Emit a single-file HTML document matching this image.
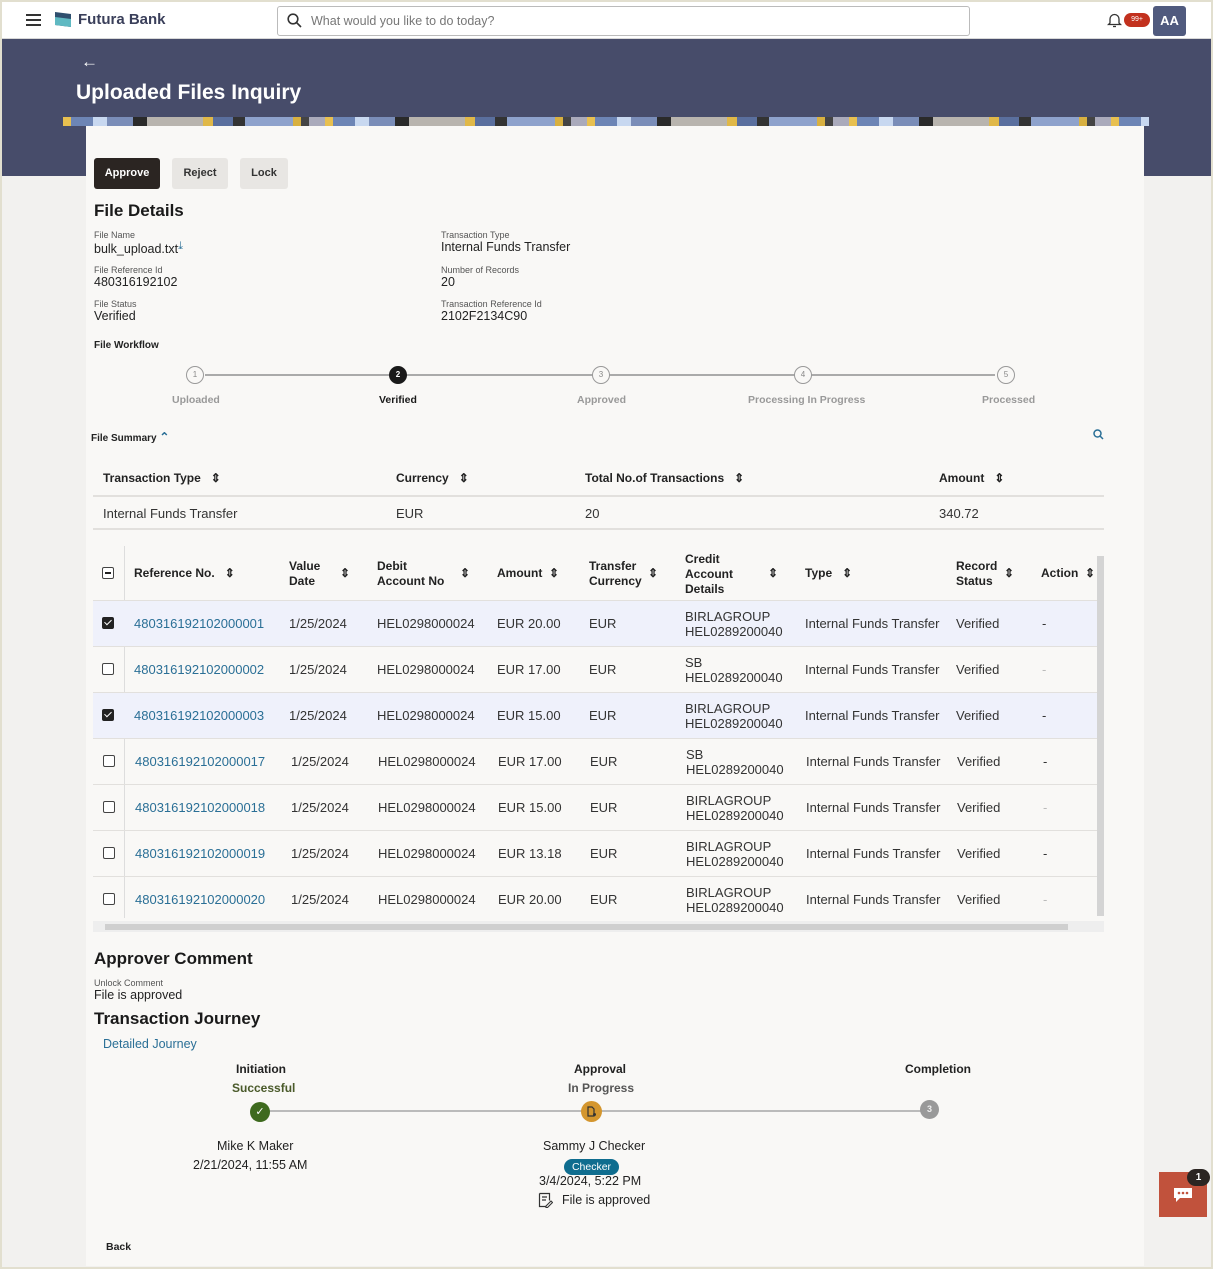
<!DOCTYPE html>
<html><head><meta charset="utf-8"><style>
*{margin:0;padding:0;box-sizing:border-box}
body{width:1213px;height:1269px;position:relative;overflow:hidden;background:#f2f1ef;font-family:"Liberation Sans",sans-serif;color:#222}
.a{position:absolute;white-space:nowrap}
.frame{position:absolute;left:0;top:0;width:1213px;height:1269px;border:2px solid #e2dfcf;pointer-events:none;z-index:50}
.lbl{font-size:9px;color:#555}
.val{font-size:12.5px;color:#222}
.th{font-size:12px;font-weight:bold;color:#222;line-height:15px}
.td{font-size:13px;color:#333}
.lnk{color:#2a6f96}
.cb{position:absolute;width:12px;height:12px;border:1.5px solid #444;border-radius:2px;background:#fff}
.cb.on{background:#222;border-color:#222}
.cb.on:after{content:"";position:absolute;left:3px;top:0px;width:3px;height:6px;border:solid #fff;border-width:0 1.5px 1.5px 0;transform:rotate(45deg)}
.step{position:absolute;width:18px;height:18px;border:1.5px solid #999;border-radius:50%;font-size:8px;color:#888;text-align:center;line-height:15px;background:#f9f8f6}
.stl{font-size:10.5px;font-weight:bold;color:#999}
</style></head><body>
<div class="frame"></div>
<div class="a" style="left:0;top:0;width:1213px;height:39px;background:#fff;border-bottom:1px solid #d8d8d8"></div>
<div class="a" style="left:26px;top:14px;width:15px;height:2px;background:#333;box-shadow:0 5px 0 #333,0 10px 0 #333"></div>
<svg class="a" style="left:54px;top:11px" width="19" height="17" viewBox="0 0 19 17"><path d="M1 1 L17 3 L17 16 L1 14Z" fill="#2f4f6e"/><path d="M1 6 L17 8 L17 16 L1 14Z" fill="#5fb9c2"/></svg>
<div class="a" style="left:78px;top:11px;font-size:15px;color:#3a3f5a;font-weight:bold">Futura Bank</div>
<div class="a" style="left:277px;top:6px;width:693px;height:30px;border:1px solid #bbb;border-radius:3px;background:#fff"></div>
<svg class="a" style="left:287px;top:13px" width="15" height="15" viewBox="0 0 15 15"><circle cx="6" cy="6" r="4.8" fill="none" stroke="#333" stroke-width="1.6"/><path d="M9.5 9.5L14 14" stroke="#333" stroke-width="1.6"/></svg>
<div class="a" style="left:311px;top:14px;font-size:12.5px;color:#777">What would you like to do today?</div>
<svg class="a" style="left:1107px;top:12px" width="15" height="16" viewBox="0 0 15 16"><path d="M3 11V7a4.5 4.5 0 0 1 9 0v4l1.5 1.5h-12Z" fill="none" stroke="#333" stroke-width="1.3"/><path d="M6 14.5h3" stroke="#333" stroke-width="1.3"/></svg>
<div class="a" style="left:1124px;top:13px;width:26px;height:14px;border-radius:7px;background:#c2311e;color:#fff;font-size:7px;text-align:center;line-height:14px">99+</div>
<div class="a" style="left:1153px;top:6px;width:33px;height:30px;border-radius:3px;background:#505a7e;color:#fff;font-size:13px;font-weight:bold;text-align:center;line-height:30px">AA</div>
<div class="a" style="left:2px;top:39px;width:1209px;height:137px;background:#474c6a"></div>
<div class="a" style="left:81px;top:52px;font-size:17px;color:#fff">&#8592;</div>
<div class="a" style="left:76px;top:81px;font-size:21px;font-weight:bold;color:#fff">Uploaded Files Inquiry</div>
<div class="a" style="left:63px;top:117px;width:1086px;height:9px;background:repeating-linear-gradient(90deg,#e8c050 0 8px,#6d85b5 8px 30px,#c8d8f0 30px 44px,#7a8db8 44px 70px,#2a2a2a 70px 84px,#b8b4ae 84px 140px,#e0b848 140px 150px,#5a6f9e 150px 170px,#333 170px 182px,#8ea2cc 182px 230px,#d8b040 230px 238px,#444 238px 246px,#aab 246px 262px)"></div>
<div class="a" style="left:86px;top:126px;width:1058px;height:1140px;background:#f9f8f6"></div>
<div class="a" style="left:94px;top:158px;width:66px;height:31px;background:#2b2522;border-radius:3px;color:#fff;font-size:11px;font-weight:bold;text-align:center;line-height:31px">Approve</div>
<div class="a" style="left:172px;top:158px;width:56px;height:31px;background:#e8e6e3;border-radius:3px;color:#333;font-size:11px;font-weight:bold;text-align:center;line-height:31px">Reject</div>
<div class="a" style="left:240px;top:158px;width:48px;height:31px;background:#e8e6e3;border-radius:3px;color:#333;font-size:11px;font-weight:bold;text-align:center;line-height:31px">Lock</div>
<div class="a" style="left:94px;top:201px;font-size:17px;font-weight:bold;color:#1a1a1a">File Details</div>
<div class="a lbl" style="left:94px;top:230px">File Name</div>
<div class="a val" style="left:94px;top:240px">bulk_upload.txt<span style="color:#2a6f96;font-size:11px;vertical-align:4px">&#10515;</span></div>
<div class="a lbl" style="left:94px;top:265px">File Reference Id</div>
<div class="a val" style="left:94px;top:275px">480316192102</div>
<div class="a lbl" style="left:94px;top:299px">File Status</div>
<div class="a val" style="left:94px;top:309px">Verified</div>
<div class="a lbl" style="left:441px;top:230px">Transaction Type</div>
<div class="a val" style="left:441px;top:240px">Internal Funds Transfer</div>
<div class="a lbl" style="left:441px;top:265px">Number of Records</div>
<div class="a val" style="left:441px;top:275px">20</div>
<div class="a lbl" style="left:441px;top:299px">Transaction Reference Id</div>
<div class="a val" style="left:441px;top:309px">2102F2134C90</div>
<div class="a" style="left:94px;top:340px;font-size:10px;font-weight:bold">File Workflow</div>
<div class="a" style="left:205px;top:374px;width:790px;height:1.5px;background:#aaa"></div>
<div class="step" style="left:186px;top:366px">1</div>
<div class="step" style="left:389px;top:366px;background:#1a1a1a;border-color:#1a1a1a;color:#fff;font-weight:bold">2</div>
<div class="step" style="left:592px;top:366px">3</div>
<div class="step" style="left:794px;top:366px">4</div>
<div class="step" style="left:997px;top:366px">5</div>
<div class="a stl" style="left:172px;top:394px">Uploaded</div>
<div class="a stl" style="left:379px;top:394px;color:#1a1a1a">Verified</div>
<div class="a stl" style="left:577px;top:394px">Approved</div>
<div class="a stl" style="left:748px;top:394px">Processing In Progress</div>
<div class="a stl" style="left:982px;top:394px">Processed</div>
<div class="a" style="left:91px;top:430px;font-size:10px;font-weight:bold">File Summary <span style="color:#2a6f96;font-size:12px">&#8963;</span></div>
<svg class="a" style="left:1093px;top:429px" width="11" height="11" viewBox="0 0 11 11"><circle cx="4.5" cy="4.5" r="3.5" fill="none" stroke="#2a6f96" stroke-width="1.5"/><path d="M7 7L10 10" stroke="#2a6f96" stroke-width="1.5"/></svg>
<div class="a th" style="left:103px;top:471px">Transaction Type &nbsp;&nbsp;&#8661;</div>
<div class="a th" style="left:396px;top:471px">Currency &nbsp;&nbsp;&#8661;</div>
<div class="a th" style="left:585px;top:471px">Total No.of Transactions &nbsp;&nbsp;&#8661;</div>
<div class="a th" style="left:939px;top:471px">Amount &nbsp;&nbsp;&#8661;</div>
<div class="a" style="left:93px;top:495px;width:1011px;height:1.5px;background:#e2e0dd"></div>
<div class="a td" style="left:103px;top:506px">Internal Funds Transfer</div>
<div class="a td" style="left:396px;top:506px">EUR</div>
<div class="a td" style="left:585px;top:506px">20</div>
<div class="a td" style="left:939px;top:506px">340.72</div>
<div class="a" style="left:93px;top:528px;width:1011px;height:1.5px;background:#e2e0dd"></div>
<div class="a" style="left:124px;top:546px;width:1px;height:372px;background:#ddd"></div>
<div class="a" style="left:1097px;top:556px;width:7px;height:360px;background:#d4d4d4"></div>
<div class="a" style="left:93px;top:921px;width:1011px;height:11px;background:#eee"></div>
<div class="a" style="left:105px;top:924px;width:963px;height:6px;background:#cfcfcf"></div>
<div class="cb" style="left:102px;top:567px"><div style="position:absolute;left:2px;top:4px;width:6px;height:1.5px;background:#222"></div></div>
<div class="a th" style="left:134px;top:566px">Reference No. &nbsp;&nbsp;&#8661;</div>
<div class="a th" style="left:289px;top:559px">Value<br>Date</div><div class="a th" style="left:340px;top:566px">&#8661;</div>
<div class="a th" style="left:377px;top:559px">Debit<br>Account No</div><div class="a th" style="left:460px;top:566px">&#8661;</div>
<div class="a th" style="left:497px;top:566px">Amount &nbsp;&#8661;</div>
<div class="a th" style="left:589px;top:559px">Transfer<br>Currency</div><div class="a th" style="left:648px;top:566px">&#8661;</div>
<div class="a th" style="left:685px;top:552px">Credit<br>Account<br>Details</div><div class="a th" style="left:768px;top:566px">&#8661;</div>
<div class="a th" style="left:805px;top:566px">Type &nbsp;&nbsp;&#8661;</div>
<div class="a th" style="left:956px;top:559px">Record<br>Status</div><div class="a th" style="left:1004px;top:566px">&#8661;</div>
<div class="a th" style="left:1041px;top:566px">Action &nbsp;&#8661;</div>

<div class="a" style="left:93px;top:600px;width:1004px;height:46px;background:#eff1fb;border-top:1px solid #e2e0dd"></div>
<div class="a" style="left:93px;top:646px;width:1004px;height:46px;border-top:1px solid #e2e0dd"></div>
<div class="a" style="left:93px;top:692px;width:1004px;height:46px;background:#eff1fb;border-top:1px solid #e2e0dd"></div>
<div class="a" style="left:93px;top:738px;width:1004px;height:46px;border-top:1px solid #e2e0dd"></div>
<div class="a" style="left:93px;top:784px;width:1004px;height:46px;border-top:1px solid #e2e0dd"></div>
<div class="a" style="left:93px;top:830px;width:1004px;height:46px;border-top:1px solid #e2e0dd"></div>
<div class="a" style="left:93px;top:876px;width:1004px;height:45px;border-top:1px solid #e2e0dd"></div>

<div class="cb on" style="left:102px;top:617px"></div>
<div class="a td lnk" style="left:134px;top:616px">480316192102000001</div><div class="a td" style="left:289px;top:616px">1/25/2024</div><div class="a td" style="left:377px;top:616px">HEL0298000024</div><div class="a td" style="left:497px;top:616px">EUR 20.00</div><div class="a td" style="left:589px;top:616px">EUR</div><div class="a td" style="left:685px;top:609px;line-height:15px">BIRLAGROUP<br>HEL0289200040</div><div class="a td" style="left:805px;top:616px">Internal Funds Transfer</div><div class="a td" style="left:956px;top:616px">Verified</div><div class="a td" style="left:1042px;top:616px">-</div>

<div class="cb" style="left:102px;top:663px"></div>
<div class="a td lnk" style="left:134px;top:662px">480316192102000002</div><div class="a td" style="left:289px;top:662px">1/25/2024</div><div class="a td" style="left:377px;top:662px">HEL0298000024</div><div class="a td" style="left:497px;top:662px">EUR 17.00</div><div class="a td" style="left:589px;top:662px">EUR</div><div class="a td" style="left:685px;top:655px;line-height:15px">SB<br>HEL0289200040</div><div class="a td" style="left:805px;top:662px">Internal Funds Transfer</div><div class="a td" style="left:956px;top:662px">Verified</div><div class="a td" style="left:1042px;top:662px;color:#bbb">-</div>

<div class="cb on" style="left:102px;top:709px"></div>
<div class="a td lnk" style="left:134px;top:708px">480316192102000003</div><div class="a td" style="left:289px;top:708px">1/25/2024</div><div class="a td" style="left:377px;top:708px">HEL0298000024</div><div class="a td" style="left:497px;top:708px">EUR 15.00</div><div class="a td" style="left:589px;top:708px">EUR</div><div class="a td" style="left:685px;top:701px;line-height:15px">BIRLAGROUP<br>HEL0289200040</div><div class="a td" style="left:805px;top:708px">Internal Funds Transfer</div><div class="a td" style="left:956px;top:708px">Verified</div><div class="a td" style="left:1042px;top:708px">-</div>

<div class="cb" style="left:103px;top:755px"></div>
<div class="a td lnk" style="left:135px;top:754px">480316192102000017</div><div class="a td" style="left:291px;top:754px">1/25/2024</div><div class="a td" style="left:378px;top:754px">HEL0298000024</div><div class="a td" style="left:498px;top:754px">EUR 17.00</div><div class="a td" style="left:590px;top:754px">EUR</div><div class="a td" style="left:686px;top:747px;line-height:15px">SB<br>HEL0289200040</div><div class="a td" style="left:806px;top:754px">Internal Funds Transfer</div><div class="a td" style="left:957px;top:754px">Verified</div><div class="a td" style="left:1043px;top:754px">-</div>

<div class="cb" style="left:103px;top:801px"></div>
<div class="a td lnk" style="left:135px;top:800px">480316192102000018</div><div class="a td" style="left:291px;top:800px">1/25/2024</div><div class="a td" style="left:378px;top:800px">HEL0298000024</div><div class="a td" style="left:498px;top:800px">EUR 15.00</div><div class="a td" style="left:590px;top:800px">EUR</div><div class="a td" style="left:686px;top:793px;line-height:15px">BIRLAGROUP<br>HEL0289200040</div><div class="a td" style="left:806px;top:800px">Internal Funds Transfer</div><div class="a td" style="left:957px;top:800px">Verified</div><div class="a td" style="left:1043px;top:800px;color:#bbb">-</div>

<div class="cb" style="left:103px;top:847px"></div>
<div class="a td lnk" style="left:135px;top:846px">480316192102000019</div><div class="a td" style="left:291px;top:846px">1/25/2024</div><div class="a td" style="left:378px;top:846px">HEL0298000024</div><div class="a td" style="left:498px;top:846px">EUR 13.18</div><div class="a td" style="left:590px;top:846px">EUR</div><div class="a td" style="left:686px;top:839px;line-height:15px">BIRLAGROUP<br>HEL0289200040</div><div class="a td" style="left:806px;top:846px">Internal Funds Transfer</div><div class="a td" style="left:957px;top:846px">Verified</div><div class="a td" style="left:1043px;top:846px">-</div>

<div class="cb" style="left:103px;top:893px"></div>
<div class="a td lnk" style="left:135px;top:892px">480316192102000020</div><div class="a td" style="left:291px;top:892px">1/25/2024</div><div class="a td" style="left:378px;top:892px">HEL0298000024</div><div class="a td" style="left:498px;top:892px">EUR 20.00</div><div class="a td" style="left:590px;top:892px">EUR</div><div class="a td" style="left:686px;top:885px;line-height:15px">BIRLAGROUP<br>HEL0289200040</div><div class="a td" style="left:806px;top:892px">Internal Funds Transfer</div><div class="a td" style="left:957px;top:892px">Verified</div><div class="a td" style="left:1043px;top:892px;color:#bbb">-</div>

<div class="a" style="left:94px;top:949px;font-size:17px;font-weight:bold;color:#1a1a1a">Approver Comment</div>
<div class="a lbl" style="left:94px;top:978px">Unlock Comment</div>
<div class="a val" style="left:94px;top:988px">File is approved</div>
<div class="a" style="left:94px;top:1009px;font-size:17px;font-weight:bold;color:#1a1a1a">Transaction Journey</div>
<div class="a val lnk" style="left:103px;top:1037px">Detailed Journey</div>
<div class="a" style="left:236px;top:1062px;font-size:12px;font-weight:bold">Initiation</div>
<div class="a" style="left:232px;top:1081px;font-size:12px;font-weight:bold;color:#4a5a2a">Successful</div>
<div class="a" style="left:574px;top:1062px;font-size:12px;font-weight:bold">Approval</div>
<div class="a" style="left:568px;top:1081px;font-size:12px;font-weight:bold;color:#555">In Progress</div>
<div class="a" style="left:905px;top:1062px;font-size:12px;font-weight:bold">Completion</div>
<div class="a" style="left:260px;top:1110px;width:670px;height:1.5px;background:#bbb"></div>
<div class="a" style="left:250px;top:1102px;width:20px;height:20px;border-radius:50%;background:#3e6a1e;color:#fff;font-size:11px;text-align:center;line-height:20px">&#10003;</div>
<div class="a" style="left:581px;top:1101px;width:21px;height:21px;border-radius:50%;background:#d4962e"><svg style="position:absolute;left:6px;top:5px" width="10" height="11" viewBox="0 0 10 11"><path d="M1 1h4l2 2v7H1Z" fill="none" stroke="#333" stroke-width="1.2"/><circle cx="7.5" cy="8.5" r="1.5" fill="#333"/></svg></div>
<div class="a" style="left:920px;top:1100px;width:19px;height:19px;border-radius:50%;background:#999;color:#eee;font-size:9px;font-weight:bold;text-align:center;line-height:19px">3</div>
<div class="a val" style="left:217px;top:1139px">Mike K Maker</div>
<div class="a val" style="left:193px;top:1158px">2/21/2024, 11:55 AM</div>
<div class="a val" style="left:543px;top:1139px">Sammy J Checker</div>
<div class="a" style="left:564px;top:1159px;width:55px;height:16px;border-radius:8px;background:#0f6d8f;color:#fff;font-size:10.5px;text-align:center;line-height:16px">Checker</div>
<div class="a val" style="left:539px;top:1174px">3/4/2024, 5:22 PM</div>
<svg class="a" style="left:538px;top:1192px" width="15" height="16" viewBox="0 0 15 16"><path d="M1.5 1.5h10v7M1.5 1.5v13h6" fill="none" stroke="#333" stroke-width="1.2"/><path d="M4 5h5M4 8h4" stroke="#333" stroke-width="1.2"/><path d="M8 14l5-5 1.5 1.5-5 5H8Z" fill="none" stroke="#333" stroke-width="1.1"/></svg>
<div class="a val" style="left:562px;top:1193px">File is approved</div>
<div class="a" style="left:106px;top:1241px;font-size:10.5px;font-weight:bold">Back</div>
<div class="a" style="left:1159px;top:1172px;width:48px;height:45px;background:#c1523c"></div>
<svg class="a" style="left:1173px;top:1187px" width="20" height="16" viewBox="0 0 20 16"><path d="M1 1h18v10H7l-4 4v-4H1Z" fill="#fff"/><circle cx="6" cy="6" r="1.3" fill="#c1523c"/><circle cx="10" cy="6" r="1.3" fill="#c1523c"/><circle cx="14" cy="6" r="1.3" fill="#c1523c"/></svg>
<div class="a" style="left:1187px;top:1169px;width:23px;height:17px;border-radius:9px;background:#2b2522;color:#fff;font-size:10px;font-weight:bold;text-align:center;line-height:17px">1</div>
</body></html>
